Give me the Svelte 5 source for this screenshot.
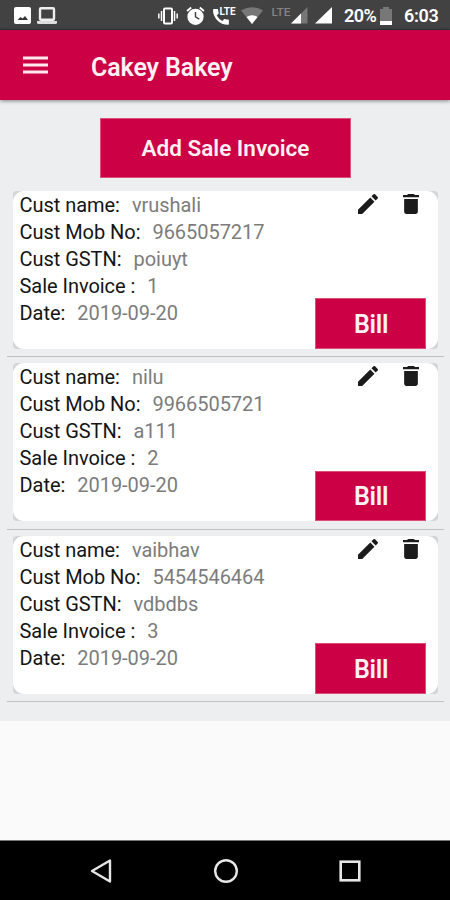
<script lang="ts">
  type Invoice = {
    name: string;
    mobile: string;
    gstn: string;
    number: number;
    date: string;
  };

  let invoices: Invoice[] = [
    { name: "vrushali", mobile: "9665057217", gstn: "poiuyt", number: 1, date: "2019-09-20" },
    { name: "nilu", mobile: "9966505721", gstn: "a111", number: 2, date: "2019-09-20" },
    { name: "vaibhav", mobile: "5454546464", gstn: "vdbdbs", number: 3, date: "2019-09-20" },
  ];
</script>

<div class="screen">
  <div class="status">
    <svg class="picture" width="17" height="17" viewBox="0 0 17 17">
      <rect width="17" height="17" rx="2" fill="#fff" />
      <path d="M3.5 13l3-3 2 1.5 2.5-2.500 3 4z" fill="#333" />
    </svg>
    <svg class="laptop" width="20" height="17" viewBox="0 0 20 17">
      <rect x="3" y="1.2" width="14" height="11.6" rx="1" fill="none" stroke="#eee" stroke-width="2.4" />
      <path d="M0 14h20v1.5q0 1.5-1.5 1.5h-17Q0 17 0 15.500z" fill="#ddd" />
    </svg>
    <svg class="vibrate" width="20" height="18" viewBox="0 0 20 18">
      <rect x="6" y="1.500" width="8" height="15" rx="1" fill="none" stroke="#fff" stroke-width="2" />
      <path d="M3.500 4v10M16.500 4v10M.8 6.500v5M19.200 6.500v5" stroke="#fff" stroke-width="1.500" />
    </svg>
    <svg class="alarm" width="19" height="19" viewBox="2 1 20 21">
      <path fill="#fff" fill-rule="evenodd" d="M22 5.720l-4.600-3.860-1.290 1.530 4.600 3.860L22 5.720zM7.880 3.390L6.600 1.860 2 5.710l1.290 1.530 4.590-3.850zM12 4a9 9 0 1 0 0 18 9 9 0 0 0 0-18zm-.8 3.500h1.600v5.200l3.800 2.200-.8 1.300-4.600-2.700z" />
    </svg>
    <svg class="call" width="23" height="19" viewBox="0 0 23 19">
      <path fill="#fff" d="M1 3h3.400q.6 0 .7.700.1 1.700.6 3.100.1.500-.3.900L3.700 9.400q2.100 3.700 5.600 5.500l1.700-1.700q.4-.4.900-.2 1.500.5 3.200.5.800 0 .8.800V18q0 .8-.8.800Q8.500 18.700 4.200 14.200 0 9.700 0 3.900 0 3 1 3z" />
      <text x="6.500" y="8.800" textLength="16" lengthAdjust="spacingAndGlyphs">LTE</text>
    </svg>
    <svg class="wifi" width="22" height="17" viewBox="0 0 22 17">
      <path d="M0 3.500Q11-3 22 3.500L11 17z" fill="#777" />
      <path d="M5.500 10Q11 6.500 16.500 10L11 17z" fill="#fff" />
    </svg>
    <svg class="signal-lte" width="37" height="20" viewBox="0 -3 37 20">
      <text class="dim" x="0.500" y="8.500" textLength="19" lengthAdjust="spacingAndGlyphs">LTE</text>
      <path d="M20 16.500L36.500 0v16.500z" fill="#777" />
      <path d="M20 16.500L30 6.500v10z" fill="#fff" />
    </svg>
    <svg class="signal" width="17" height="17" viewBox="0 0 17 17">
      <path d="M0 16.500L17 0v16.500z" fill="#fff" />
    </svg>
    <span class="percent">20%</span>
    <svg class="battery" width="12" height="18" viewBox="0 0 12 18">
      <path d="M3 0h6v2h3v12H0V2h3z" fill="#777" />
      <path d="M0 14h12v4H0z" fill="#fff" />
    </svg>
    <span class="clock">6:03</span>
  </div>

  <header>
    <svg width="25" height="18" viewBox="0 0 25 18">
      <path d="M0 2h25M0 9h25M0 16h25" stroke="#ffe9ef" stroke-width="3" />
    </svg>
    <h1>Cakey Bakey</h1>
  </header>

  <main>
    <button class="add">Add Sale Invoice</button>

    {#each invoices as invoice}
      <div class="item">
        <div class="corners">
          <div class="card">
            <div class="details">
              <p>Cust name:<span>{invoice.name}</span></p>
              <p>Cust Mob No:<span>{invoice.mobile}</span></p>
              <p>Cust GSTN:<span>{invoice.gstn}</span></p>
              <p>Sale Invoice :<span>{invoice.number}</span></p>
              <p>Date:<span>{invoice.date}</span></p>
            </div>
            <div class="actions">
              <div class="icons">
                <svg width="20" height="20" viewBox="3 3 18 18">
                  <path fill="#1b1b1b" d="M3 17.250V21h3.750L17.810 9.940l-3.750-3.750L3 17.250zM20.710 7.040a1 1 0 0 0 0-1.410l-2.340-2.340a1 1 0 0 0-1.410 0l-1.830 1.830 3.750 3.750 1.830-1.830z" />
                </svg>
                <svg width="16" height="20" viewBox="5 3 14 18" preserveAspectRatio="none">
                  <path fill="#1b1b1b" d="M6 19c0 1.100.9 2 2 2h8c1.100 0 2-.9 2-2V7.500H6V19zM19 4h-3.500l-1-1h-5l-1 1H5v2h14V4z" />
                </svg>
              </div>
              <button class="bill">Bill</button>
            </div>
          </div>
        </div>
      </div>
    {/each}
  </main>

  <nav>
    <svg width="22" height="26" viewBox="0 0 22 26">
      <path d="M2 13L20 2.500v21z" fill="none" stroke="#e6e6e6" stroke-width="2.400" stroke-linejoin="round" />
    </svg>
    <svg width="26" height="26" viewBox="0 0 26 26">
      <circle cx="13" cy="13" r="10.800" fill="none" stroke="#e6e6e6" stroke-width="2.400" />
    </svg>
    <svg width="22" height="22" viewBox="0 0 22 22">
      <rect x="1.700" y="1.700" width="18.600" height="18.600" fill="none" stroke="#e6e6e6" stroke-width="2.600" />
    </svg>
  </nav>
</div>

<style>
  :global(body) {
    margin: 0;
  }

  .screen {
    width: 450px;
    height: 900px;
    display: flex;
    flex-direction: column;
    overflow: hidden;
    background-color: #fafafa;
    font-family: Roboto, sans-serif;
  }

  .status {
    box-sizing: border-box;
    height: 30px;
    padding: 2px 0 0 14px;
    display: flex;
    flex-shrink: 0;
    align-items: center;
    background-color: #424242;
    border-bottom: 1px solid #263b3b;
    color: #fff;
    font-size: 18px;
    font-weight: 600;
  }

  .status svg {
    flex-shrink: 0;
  }

  .status text {
    fill: #fff;
    font-size: 10px;
    font-weight: 700;
  }

  .status .dim {
    fill: #858585;
    font-size: 11px;
    font-weight: 500;
  }

  .laptop {
    margin-left: 6px;
  }

  .vibrate {
    margin-left: 101px;
  }

  .alarm {
    margin-left: 8px;
  }

  .call {
    margin-left: 8px;
  }

  .wifi {
    margin-left: 5px;
  }

  .signal-lte {
    margin-left: 8px;
    margin-bottom: 3px;
  }

  .signal {
    margin-left: 7px;
  }

  .percent {
    width: 33px;
    margin-left: 12px;
    letter-spacing: -0.5px;
  }

  .battery {
    margin-left: 3px;
  }

  .clock {
    margin-left: 12px;
    letter-spacing: -0.3px;
  }

  header {
    height: 70px;
    padding-left: 23px;
    display: flex;
    flex-shrink: 0;
    align-items: center;
    background-color: #cc0044;
    box-shadow: 0 1px 4px rgba(0, 0, 0, 0.45);
    z-index: 1;
  }

  header svg {
    margin-bottom: 1px;
  }

  h1 {
    margin: 4px 0 0 43px;
    color: #fff0f4;
    font-size: 25px;
    font-weight: 600;
    letter-spacing: -0.1px;
  }

  main {
    box-sizing: border-box;
    height: 620.5px;
    padding: 18px 6px 0 7px;
    flex-shrink: 0;
    background-color: #eceef0;
  }

  button {
    display: block;
    padding: 0;
    border: 1px solid #dc5078;
    color: #fff0f4;
    background-color: #cc0044;
    font-family: inherit;
    font-weight: 600;
  }

  .add {
    width: 251px;
    height: 60px;
    margin: 0 0 12.5px 93px;
    font-size: 22.5px;
  }

  .item {
    box-sizing: border-box;
    height: 166.5px;
    margin-bottom: 6px;
    padding: 0 6px 0 5.5px;
    border-bottom: 1px solid #bfc1c3;
  }

  .corners {
    height: 158px;
    border-radius: 4px;
    background-color: #d3d5d7;
  }

  .card {
    height: 158px;
    display: flex;
    justify-content: space-between;
    border-radius: 11px;
    background-color: #fff;
  }

  .details {
    padding: 1px 0 0 7px;
  }

  p {
    margin: 0;
    color: #141414;
    font-size: 20px;
    line-height: 27px;
    letter-spacing: -0.04px;
    white-space: nowrap;
  }

  p span {
    margin-left: 12px;
    color: #7c7c7c;
  }

  .actions {
    margin-right: 12px;
    display: flex;
    flex-direction: column;
    justify-content: space-between;
  }

  .icons {
    padding: 3px 7.5px 0 0;
    display: flex;
    justify-content: flex-end;
    gap: 25px;
  }

  .bill {
    width: 111px;
    height: 50.5px;
    padding: 2px 0 0 1px;
    font-size: 25px;
    letter-spacing: -0.3px;
  }

  nav {
    box-sizing: border-box;
    height: 60px;
    margin-top: auto;
    padding: 0 89px 0 90px;
    display: flex;
    flex-shrink: 0;
    align-items: center;
    justify-content: space-between;
    background-color: #000;
    border-top: 1px solid #777;
  }
</style>
